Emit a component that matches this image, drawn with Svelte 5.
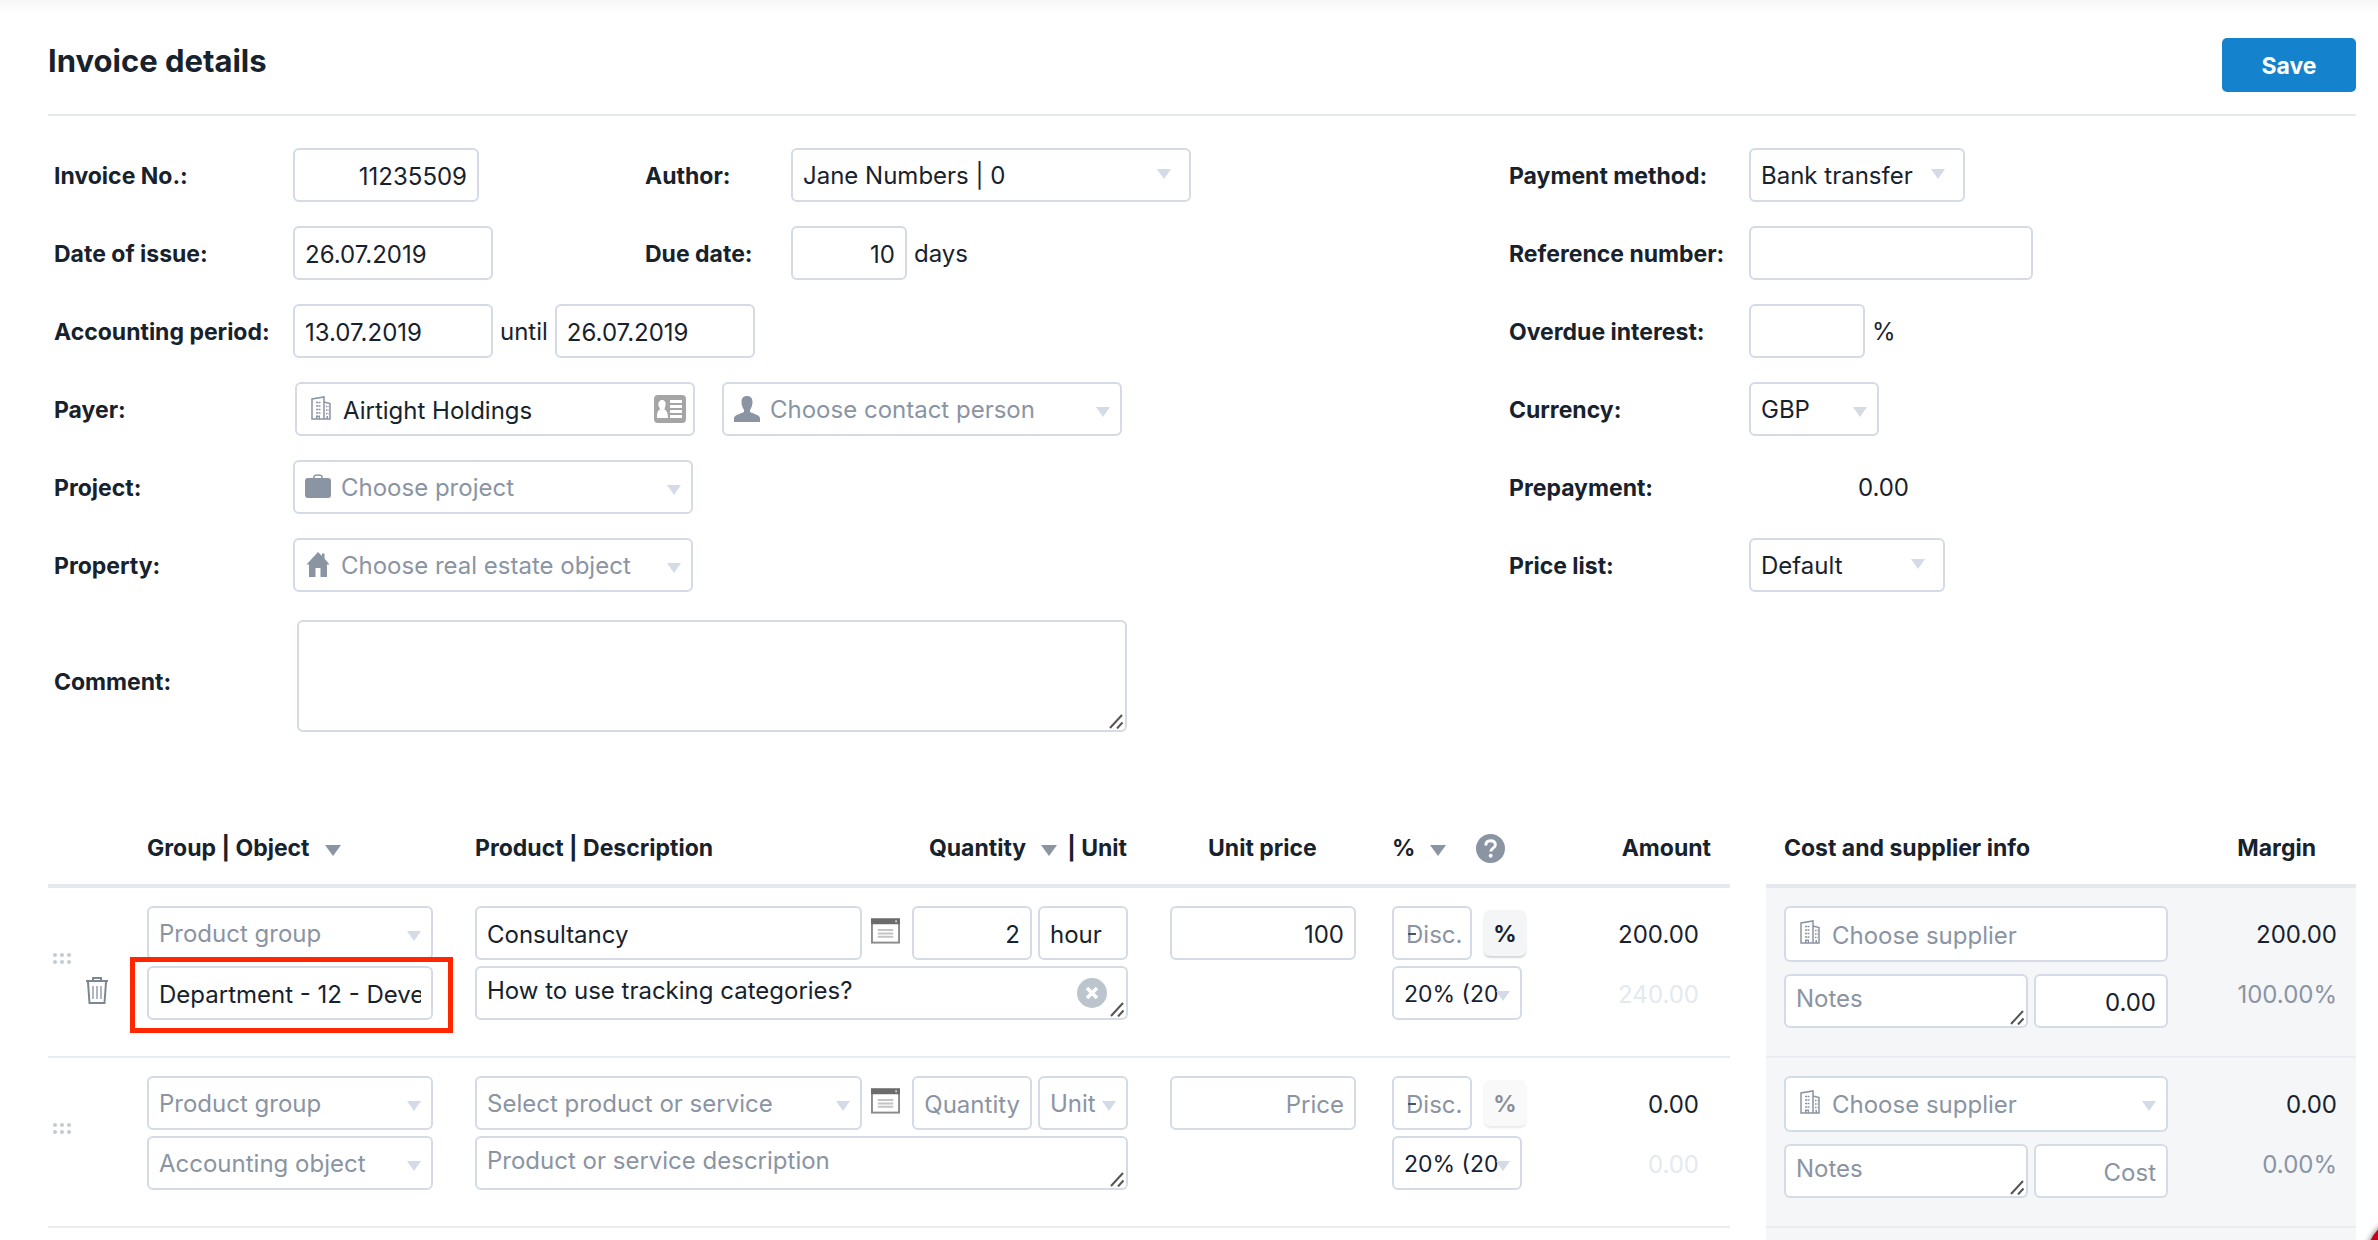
<script>
  //Invoice header values
  let invoice = {
    number: '11235509',
    issued: '26.07.2019',
    periodStart: '13.07.2019',
    periodEnd: '26.07.2019',
    dueDays: '10',
    payer: 'Airtight Holdings',
    reference: '',
    interest: '',
    comment: ''
  };

  //Invoice rows, an empty string shows the placeholder of the field
  let rows = [
    {
      object: 'Department - 12 - Development',
      product: 'Consultancy',
      description: 'How to use tracking categories?',
      quantity: '2',
      unit: 'hour',
      price: '100',
      amount: '200.00',
      total: '240.00',
      cost: '0.00',
      margin: '200.00',
      marginPercent: '100.00%',
      filled: true
    },
    {
      object: '',
      product: '',
      description: '',
      quantity: '',
      unit: '',
      price: '',
      amount: '0.00',
      total: '0.00',
      cost: '',
      margin: '0.00',
      marginPercent: '0.00%',
      filled: false
    }
  ];

  let clearDescription = (row) => {
    row.description = '';
    rows = rows;
  }

  let deleteRow = (index) => {
    rows.splice(index, 1);
    rows = rows;
  }
</script>

<!-- Corner grip of the text areas -->
{#snippet grip()}
  <svg class="grip" viewBox="0 0 14 15" aria-hidden="true">
    <path d="M1 14 L13 1 M8 14.500 L13.500 8.500" />
  </svg>
{/snippet}

{#snippet building()}
  <svg class="icon building" viewBox="0 0 20 24" aria-hidden="true">
    <path d="M1 23 V3 L13 1 V23 Z M13 6 L19 7.500 V23 H13" fill="none" stroke="currentColor" stroke-width="1.500" />
    <path d="M5 6.500 H9.500 M5 10 H9.500 M5 13.500 H9.500 M5 17 H9.500" stroke="currentColor" stroke-width="1.500" stroke-dasharray="2 0.500" />
    <path d="M15 10.500 H17.500 M15 14 H17.500 M15 17.500 H17.500" stroke="currentColor" stroke-width="1.500" stroke-dasharray="1 0.500" />
    <path d="M5 19.500 H9 V23 H7.800 V21 H6.500 V23 H5 Z M15.500 20 H17 V23 H15.500 Z" fill="currentColor" />
  </svg>
{/snippet}

<main class="page">
  <header class="top">
    <h1>Invoice details</h1>
    <button class="save" type="button">Save</button>
  </header>

  <form class="details">
    <div class="main-fields">
      <div class="line">
        <label class="name" for="number">Invoice No.:</label>
        <div class="value first-value"><input id="number" class="field w-186 right" bind:value={invoice.number} /></div>
        <label class="name second" for="author">Author:</label>
        <span class="drop w-400"><select id="author" class="field"><option>Jane Numbers | 0</option></select></span>
      </div>
      <div class="line">
        <label class="name" for="issued">Date of issue:</label>
        <div class="value first-value"><input id="issued" class="field w-200" bind:value={invoice.issued} /></div>
        <label class="name second" for="due">Due date:</label>
        <div class="value"><input id="due" class="field w-116 right" bind:value={invoice.dueDays} /><span>days</span></div>
      </div>
      <div class="line">
        <label class="name" for="from">Accounting period:</label>
        <div class="value">
          <input id="from" class="field w-200" bind:value={invoice.periodStart} />
          <label for="to">until</label>
          <input id="to" class="field w-200" bind:value={invoice.periodEnd} />
        </div>
      </div>
      <div class="line">
        <label class="name" for="payer">Payer:</label>
        <div class="value payer">
          <span class="with-icon w-400">
            {@render building()}
            <input id="payer" class="field" bind:value={invoice.payer} />
            <svg class="card" viewBox="0 0 32 28" aria-hidden="true">
              <rect width="32" height="28" rx="4" fill="#a5a5a5" />
              <path d="M8 5 C11 5 12 7.500 11.500 10.500 C11.200 12.500 10.500 13.300 10.500 14.500 C13 16 14 18 14 23 H3 C3 18 3.500 16 6 14.500 C6 13 4.800 12.500 4.500 10.500 C4 7.500 5.500 5 8 5 Z M16 5 H28 V8 H16 Z M16 10 H28 V13 H16 Z M16 15 H28 V18 H16 Z M16 20 H28 V23 H16 Z" fill="#fff" />
            </svg>
          </span>
          <span class="with-icon drop low w-400">
            <svg class="icon" viewBox="0 0 26 26" aria-hidden="true">
              <path d="M13 0 C17 0 18.500 2.500 18.500 6 C18.500 10 17 12 16 14 V16 C20 18 25.500 19 26 22 V26 H0 V22 C0.500 19 6 18 10 16 V14 C9 12 7.500 10 7.500 6 C7.500 2.500 9 0 13 0 Z" fill="currentColor" />
            </svg>
            <select class="field muted" aria-label="Contact person"><option>Choose contact person</option></select>
          </span>
        </div>
      </div>
      <div class="line">
        <label class="name" for="project">Project:</label>
        <span class="with-icon drop low w-400">
          <svg class="icon" viewBox="0 0 26 26" aria-hidden="true">
            <rect y="4" width="26" height="20" rx="3" fill="currentColor" />
            <path d="M9 4 V3 Q9 1 13 1 Q17 1 17 3 V4" fill="none" stroke="currentColor" stroke-width="1.500" />
          </svg>
          <select id="project" class="field muted"><option>Choose project</option></select>
        </span>
      </div>
      <div class="line">
        <label class="name" for="property">Property:</label>
        <span class="with-icon drop low w-400">
          <svg class="icon" viewBox="0 0 26 26" aria-hidden="true">
            <path d="M13 0 L17 4 V1.500 H19.500 V6.500 L24.500 12.500 H22 V25 H15.500 V16 H10.500 V25 H4 V12.500 H1.500 Z" fill="currentColor" />
          </svg>
          <select id="property" class="field muted"><option>Choose real estate object</option></select>
        </span>
      </div>
      <div class="line comment">
        <label class="name" for="comment">Comment:</label>
        <span class="area"><textarea id="comment" class="field" bind:value={invoice.comment}></textarea>{@render grip()}</span>
      </div>
    </div>

    <div class="side-fields">
      <div class="line">
        <label class="name" for="method">Payment method:</label>
        <span class="drop w-216"><select id="method" class="field"><option>Bank transfer</option></select></span>
      </div>
      <div class="line">
        <label class="name" for="reference">Reference number:</label>
        <input id="reference" class="field w-284" bind:value={invoice.reference} />
      </div>
      <div class="line">
        <label class="name" for="interest">Overdue interest:</label>
        <div class="value"><input id="interest" class="field w-116" bind:value={invoice.interest} /><span>%</span></div>
      </div>
      <div class="line">
        <label class="name" for="currency">Currency:</label>
        <span class="drop low w-130"><select id="currency" class="field"><option>GBP</option></select></span>
      </div>
      <div class="line">
        <span class="name">Prepayment:</span>
        <span class="prepayment">0.00</span>
      </div>
      <div class="line">
        <label class="name" for="prices">Price list:</label>
        <span class="drop w-196"><select id="prices" class="field"><option>Default</option></select></span>
      </div>
    </div>
  </form>

  <div class="lines">
    <!-- Products on the invoice -->
    <table class="products">
      <colgroup>
        <col class="col-tools" /><col class="col-group" /><col class="col-product" />
        <col class="col-price" /><col class="col-percent" /><col />
      </colgroup>
      <thead>
        <tr>
          <th></th>
          <th><span class="head">Group | Object <i class="caret"></i></span></th>
          <th>
            <span class="head split">
              <span>Product | Description</span>
              <span class="head quantity-head">Quantity <i class="caret"></i><span>| Unit</span></span>
            </span>
          </th>
          <th class="price-head">Unit price</th>
          <th>
            <span class="head">% <i class="caret"></i>
              <svg class="help" viewBox="0 0 28 28" role="img" aria-label="Help">
                <circle cx="14" cy="14" r="14" fill="#8a94a3" />
                <path d="M9.500 11 C9.500 8 11.500 6.500 14 6.500 C16.800 6.500 18.700 8 18.700 10.500 C18.700 13.500 14.200 13.700 14.200 17" fill="none" stroke="#fff" stroke-width="2.800" />
                <circle cx="14.200" cy="21" r="1.900" fill="#fff" />
              </svg>
            </span>
          </th>
          <th class="amount-head">Amount</th>
        </tr>
      </thead>
      <tbody>
        {#each rows as row, index}
          <tr>
            <td>
              <div class="tools">
                <svg class="dots" viewBox="0 0 20 12" aria-hidden="true">
                  {#each [2, 9, 16] as x}
                    <circle cx={x} cy="2" r="2" />
                    <circle cx={x} cy="9" r="2" />
                  {/each}
                </svg>
                {#if row.filled}
                  <button class="plain" type="button" aria-label="Delete row" on:click={() => deleteRow(index)}>
                    <svg class="trash" viewBox="0 0 24 28" fill="none" stroke="#7c8796" aria-hidden="true">
                      <path d="M1 4 H23 M8 4 V1 H16 V4" stroke-width="2" />
                      <path d="M3 5 L4.500 26 H19.500 L21 5" stroke-width="2" />
                      <path d="M8 9 V22 M12 9 V22 M16 9 V22" stroke-width="1.200" />
                    </svg>
                  </button>
                {/if}
              </div>
            </td>
            <td>
              <div class="stack w-286">
                <span class="drop low"><select class="field muted" aria-label="Product group"><option>Product group</option></select></span>
                {#if row.filled}
                  <span class="marked"><input class="field" aria-label="Accounting object" bind:value={row.object} /></span>
                {:else}
                  <span class="drop low"><select class="field muted" aria-label="Accounting object"><option>Accounting object</option></select></span>
                {/if}
              </div>
            </td>
            <td>
              <div class="stack product">
                <div class="product-line">
                  {#if row.filled}
                    <input class="field grow" aria-label="Product" bind:value={row.product} />
                  {:else}
                    <span class="drop low grow"><select class="field muted" aria-label="Product"><option>Select product or service</option></select></span>
                  {/if}
                  <button class="plain" type="button" aria-label="Product details">
                    <svg class="window" viewBox="0 0 30 26" aria-hidden="true">
                      <rect x="1" y="1" width="28" height="24" fill="#fff" stroke="#8c8c8c" stroke-width="2" />
                      <rect width="30" height="6" fill="#6b6b6b" />
                      <rect x="25" y="2" width="2" height="2" fill="#ccc" />
                      <path d="M7 12 H23 M7 15.500 H23 M7 19 H23" stroke="#c4c4c4" stroke-width="2" />
                    </svg>
                  </button>
                  <input class="field w-120 right" aria-label="Quantity" placeholder="Quantity" bind:value={row.quantity} />
                  {#if row.filled}
                    <input class="field w-90" aria-label="Unit" bind:value={row.unit} />
                  {:else}
                    <span class="drop low w-90"><select class="field muted" aria-label="Unit"><option>Unit</option></select></span>
                  {/if}
                </div>
                <span class="area">
                  <textarea class="field" aria-label="Description" placeholder="Product or service description" bind:value={row.description}></textarea>
                  {#if row.filled}
                    <button class="plain clear" type="button" aria-label="Clear description" on:click={() => clearDescription(row)}>
                      <svg viewBox="0 0 30 30" aria-hidden="true">
                        <circle cx="15" cy="15" r="15" fill="#bcc5cd" />
                        <path d="M10 10 L20 20 M20 10 L10 20" stroke="#fff" stroke-width="3.600" />
                      </svg>
                    </button>
                  {/if}
                  {@render grip()}
                </span>
              </div>
            </td>
            <td><input class="field w-186 right" aria-label="Unit price" placeholder="Price" bind:value={row.price} /></td>
            <td>
              <div class="stack">
                <div class="discount">
                  <span class="disc"><input class="field w-80" aria-label="Discount" placeholder="Disc." /></span>
                  <button class="percent" type="button" disabled={!row.filled}>%</button>
                </div>
                <span class="drop low tax w-130"><select class="field" aria-label="VAT"><option>20% (20%)</option></select></span>
              </div>
            </td>
            <td>
              <div class="stack sums">
                <span>{row.amount}</span>
                <span class="total">{row.total}</span>
              </div>
            </td>
          </tr>
        {/each}
      </tbody>
    </table>

    <!-- Cost side of the same rows -->
    <div class="costs">
      <table>
        <colgroup><col class="col-cost" /><col /></colgroup>
        <thead>
          <tr><th class="cost-head">Cost and supplier info</th><th class="margin-head">Margin</th></tr>
        </thead>
        <tbody>
          {#each rows as row}
            <tr>
              <td class="cost-cell">
                <div class="stack cost">
                  {#if row.filled}
                    <span class="with-icon tall">{@render building()}<input class="field" aria-label="Supplier" placeholder="Choose supplier" /></span>
                  {:else}
                    <span class="with-icon drop low tall">{@render building()}<select class="field muted" aria-label="Supplier"><option>Choose supplier</option></select></span>
                  {/if}
                  <div class="cost-line">
                    <span class="area notes"><textarea class="field" aria-label="Notes" placeholder="Notes"></textarea>{@render grip()}</span>
                    <input class="field w-134 right" aria-label="Cost" placeholder="Cost" bind:value={row.cost} />
                  </div>
                </div>
              </td>
              <td>
                <div class="stack sums">
                  <span>{row.margin}</span>
                  <span class="margin-percent">{row.marginPercent}</span>
                </div>
              </td>
            </tr>
          {/each}
        </tbody>
      </table>
    </div>
  </div>

  <div class="badge" aria-hidden="true"></div>
</main>

<style>
  :global(body) {
    margin: 0;
    background: #fff;
  }

  .page, .page * {
    box-sizing: border-box;
  }

  .page {
    display: flex;
    flex-direction: column;
    min-height: 100vh;
    padding: 0 22px 0 48px;
    background: linear-gradient(#f6f6f6, #fff 14px);
    color: #17222d;
    font-family: Inter, "Liberation Sans", sans-serif;
    font-size: 24px;
    line-height: 30px;
  }

  .top {
    display: flex;
    justify-content: space-between;
    align-items: flex-start;
    height: 116px;
    padding-top: 38px;
    border-bottom: 2px solid #e4e9ef;
  }

  h1 {
    margin: 0;
    font-size: 31px;
    line-height: 46px;
    font-weight: 700;
  }

  .save {
    width: 134px;
    height: 54px;
    padding-top: 3px;
    border: 0;
    border-radius: 5px;
    background: #1482cc;
    color: #fff;
    font: inherit;
    font-size: 23px;
    font-weight: 700;
  }

  /* Fields */
  .field {
    display: block;
    width: 100%;
    height: 54px;
    margin: 0;
    padding: 2px 10px 0;
    border: 2px solid #d4dbe6;
    border-radius: 6px;
    background: #fff;
    color: inherit;
    font: inherit;
    outline: none;
    appearance: none;
  }

  .field::placeholder {
    color: #8a94a3;
    opacity: 1;
  }

  .muted {
    color: #8a94a3;
  }

  .right {
    text-align: right;
  }

  textarea.field {
    padding-top: 8px;
    resize: none;
    overflow: hidden;
  }

  .w-80 { width: 80px; }
  .w-90 { width: 90px; }
  .w-116 { width: 116px; }
  .w-120 { width: 120px; }
  .w-130 { width: 130px; }
  .w-134 { width: 134px; }
  .w-186 { width: 186px; }
  .w-196 { width: 196px; }
  .w-200 { width: 200px; }
  .w-216 { width: 216px; }
  .w-284 { width: 284px; }
  .w-286 { width: 286px; }
  .w-400 { width: 400px; }

  .drop, .with-icon, .area, .marked, .disc {
    display: block;
    position: relative;
  }

  .drop::after {
    content: "";
    position: absolute;
    top: 21px;
    right: 20px;
    border: 7px solid transparent;
    border-top: 10px solid #d4dbe6;
    border-bottom: 0;
  }

  .low::after {
    top: 25px;
    right: 12px;
  }

  .with-icon .field {
    padding-left: 46px;
  }

  .icon {
    position: absolute;
    top: 14px;
    left: 12px;
    width: 26px;
    height: 26px;
    color: #8a94a3;
  }

  .building {
    left: 16px;
    width: 20px;
    height: 24px;
  }

  .card {
    position: absolute;
    top: 13px;
    right: 9px;
    width: 32px;
    height: 28px;
  }

  .grip {
    position: absolute;
    right: 4px;
    bottom: 3px;
    width: 14px;
    height: 15px;
    fill: none;
    stroke: #555;
    stroke-width: 2;
  }

  /* Invoice details */
  .details {
    display: flex;
    justify-content: space-between;
    padding: 32px 0 0 6px;
  }

  .main-fields, .side-fields {
    display: flex;
    flex-direction: column;
    gap: 24px;
  }

  .side-fields {
    width: 847px;
  }

  .line {
    display: flex;
    align-items: center;
    min-height: 54px;
  }

  .name {
    width: 239px;
    padding-top: 2px;
    font-size: 23px;
    font-weight: 700;
  }

  .side-fields .name {
    width: 240px;
  }

  .name.second {
    width: 146px;
  }

  .value {
    display: flex;
    align-items: center;
    gap: 7px;
  }

  .value > span:last-child:not(.drop), .value > label {
    padding-top: 2px;
  }

  .first-value {
    width: 352px;
  }

  .payer {
    gap: 27px;
    padding-left: 2px;
  }

  .comment {
    padding-top: 4px;
  }

  .comment .name {
    padding-top: 12px;
  }

  .comment .area {
    width: 830px;
    margin-left: 4px;
  }

  .comment .field {
    height: 112px;
  }

  .prepayment {
    width: 160px;
    padding-top: 2px;
    text-align: right;
  }

  /* Invoice rows */
  .lines {
    display: flex;
    flex: 1;
    align-items: stretch;
    gap: 36px;
    padding-top: 76px;
  }

  table {
    width: 100%;
    border-spacing: 0;
    table-layout: fixed;
  }

  .products {
    flex: 1;
    align-self: flex-start;
  }

  .costs {
    width: 590px;
    background: #f4f6f8;
  }

  .col-tools { width: 99px; }
  .col-group { width: 328px; }
  .col-product { width: 695px; }
  .col-price { width: 222px; }
  .col-percent { width: 150px; }
  .col-cost { width: 402px; }

  th {
    height: 80px;
    padding: 4px 0 0;
    border-bottom: 4px solid #e4e9f0;
    background: #fff;
    font-size: 23px;
    font-weight: 700;
    text-align: left;
  }

  td {
    height: 170px;
    padding: 18px 0 0;
    border-bottom: 2px solid #e9edf2;
    vertical-align: top;
  }

  .head {
    display: flex;
    align-items: center;
    gap: 15px;
  }

  .split {
    justify-content: space-between;
    padding-right: 43px;
  }

  .quantity-head {
    gap: 10px;
  }

  .quantity-head .caret {
    margin-left: 5px;
  }

  .caret {
    border: 8px solid transparent;
    border-top: 11px solid #8a94a3;
    border-bottom: 0;
    margin-top: 4px;
  }

  .help {
    width: 29px;
    height: 29px;
    margin-left: 15px;
  }

  .price-head {
    padding-left: 38px;
  }

  .amount-head {
    padding-right: 19px;
    text-align: right;
  }

  .cost-head {
    padding-left: 18px;
  }

  .margin-head {
    padding-right: 40px;
    text-align: right;
  }

  .stack {
    display: flex;
    flex-direction: column;
    gap: 6px;
  }

  .tools {
    display: flex;
    gap: 12px;
    padding: 47px 0 0 5px;
  }

  .dots {
    width: 20px;
    height: 12px;
    fill: #c3cad3;
  }

  .plain {
    display: block;
    padding: 0;
    border: 0;
    background: none;
    line-height: 0;
  }

  .tools .plain {
    padding-top: 24px;
  }

  .trash {
    width: 24px;
    height: 28px;
  }

  /* Frame round the accounting object */
  .marked::after {
    content: "";
    position: absolute;
    inset: -9px -20px -13px -17px;
    border: 5px solid #ff2600;
    pointer-events: none;
  }

  .product {
    width: 653px;
  }

  .product-line, .cost-line {
    display: flex;
    gap: 6px;
  }

  .grow {
    flex: 1;
    width: auto;
    min-width: 0;
  }

  .product-line .plain {
    align-self: flex-start;
    padding: 12px 6px 0 3px;
  }

  .window {
    width: 29px;
    height: 26px;
  }

  .product .area .field, .notes .field {
    height: 54px;
  }

  .clear {
    position: absolute;
    top: 12px;
    right: 21px;
    width: 30px;
    height: 30px;
  }

  .discount {
    display: flex;
    align-items: center;
    gap: 12px;
  }

  .disc .field {
    padding-right: 4px;
    padding-left: 12px;
  }

  /* Dash of the empty discount, shown over the placeholder */
  .disc::after {
    content: "";
    position: absolute;
    top: 27px;
    left: 16px;
    width: 8px;
    height: 2px;
    background: #4a5563;
  }

  .percent {
    width: 42px;
    height: 46px;
    padding: 2px 0 0;
    border: 0;
    border-radius: 6px;
    background: #f4f5f7;
    box-shadow: 0 2px 2px #d5d7da;
    color: #17222d;
    font: inherit;
    font-size: 23px;
    font-weight: 700;
  }

  .percent:disabled {
    opacity: 0.5;
  }

  .tax .field {
    padding-right: 22px;
    font-size: 23px;
  }

  .sums {
    gap: 30px;
    padding: 14px 31px 0 0;
    text-align: right;
  }

  .total {
    color: #e4e9f0;
  }

  .costs .sums {
    padding-right: 19px;
  }

  .margin-percent {
    color: #8a94a3;
  }

  .cost-cell {
    padding-left: 18px;
  }

  .cost {
    gap: 12px;
  }

  .tall .field {
    height: 56px;
  }

  .notes {
    flex: 1;
  }

  .badge {
    position: fixed;
    right: -63px;
    bottom: -53px;
    width: 74px;
    height: 74px;
    border-radius: 50%;
    background: #c4001a;
    box-shadow: 0 0 6px rgba(0, 0, 0, 0.6);
  }
</style>
